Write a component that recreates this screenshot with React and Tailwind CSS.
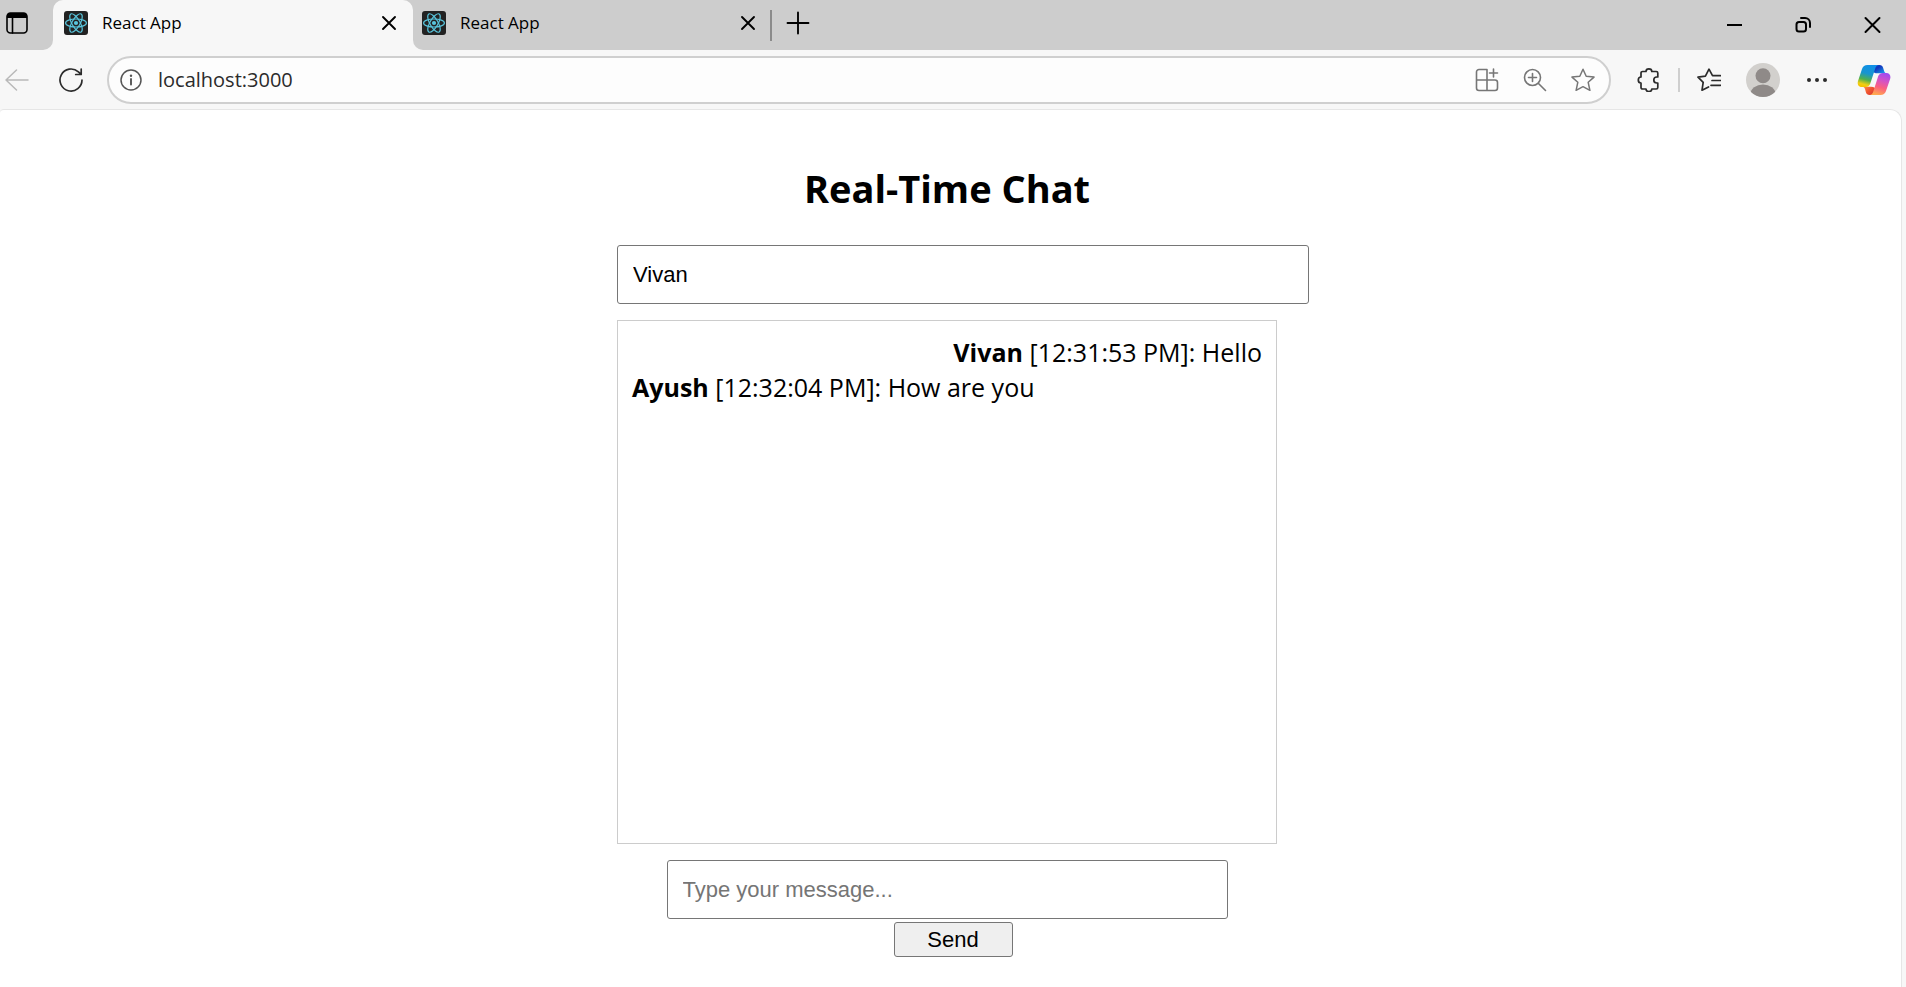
import React, { useState } from "react";

function ReactLogo() {
  return (
    <svg viewBox="0 0 24 24" className="size-6 shrink-0" aria-hidden="true">
      <rect width="24" height="24" rx="3" fill="#222" />
      <g fill="none" stroke="#58c4dc" strokeWidth="1.2">
        <ellipse cx="12" cy="12" rx="10.4" ry="4" />
        <ellipse cx="12" cy="12" rx="10.4" ry="4" transform="rotate(60 12 12)" />
        <ellipse cx="12" cy="12" rx="10.4" ry="4" transform="rotate(120 12 12)" />
      </g>
      <circle cx="12" cy="12" r="2.1" fill="#58c4dc" />
    </svg>
  );
}

function Icon({ children, className = "size-6", width = 1.5 }) {
  return (
    <svg
      viewBox="0 0 24 24"
      className={className}
      fill="none"
      stroke="currentColor"
      strokeWidth={width}
      strokeLinecap="round"
      strokeLinejoin="round"
      aria-hidden="true"
    >
      {children}
    </svg>
  );
}

function IconButton({ label, className = "w-12", children }) {
  return (
    <button type="button" aria-label={label} className={`flex h-12 shrink-0 items-center justify-center ${className}`}>
      {children}
    </button>
  );
}

function CloseGlyph() {
  return (
    <Icon width={1.9}>
      <path d="M6 6l12 12M18 6L6 18" />
    </Icon>
  );
}

function Tab({ title, className }) {
  return (
    <div className={`flex h-full items-center pb-1 ${className}`}>
      <ReactLogo />
      <span className="ml-[14px] flex-1 text-[17px] leading-6 text-black">{title}</span>
      <button type="button" aria-label={`Close ${title}`} className="flex size-6 items-center justify-center">
        <CloseGlyph />
      </button>
    </div>
  );
}

function CopilotLogo() {
  return (
    <svg viewBox="0 0 34 32" className="h-8 w-[34px]" aria-hidden="true">
      <defs>
        <linearGradient id="cpLeft" x1="0.6" y1="0" x2="0.35" y2="1">
          <stop offset="0" stopColor="#0f8fe8" />
          <stop offset="0.4" stopColor="#1795cf" />
          <stop offset="0.68" stopColor="#4fb04c" />
          <stop offset="0.9" stopColor="#f2cf12" />
          <stop offset="1" stopColor="#f5c400" />
        </linearGradient>
        <linearGradient id="cpRight" x1="0.7" y1="0" x2="0.4" y2="1">
          <stop offset="0" stopColor="#a04cf0" />
          <stop offset="0.35" stopColor="#d553c4" />
          <stop offset="0.65" stopColor="#fb6080" />
          <stop offset="1" stopColor="#ffa94e" />
        </linearGradient>
        <linearGradient id="cpTop" x1="0" y1="0" x2="1" y2="0.8">
          <stop offset="0" stopColor="#0b45c4" />
          <stop offset="0.4" stopColor="#1336bd" />
          <stop offset="1" stopColor="#16a0ee" />
        </linearGradient>
        <linearGradient id="cpBottom" x1="0" y1="0" x2="1" y2="0.6">
          <stop offset="0" stopColor="#ff9645" />
          <stop offset="0.6" stopColor="#f0532f" />
          <stop offset="1" stopColor="#d93a35" />
        </linearGradient>
      </defs>
      <path d="M15 1h7.500c2 0 3 1 3.600 2.800l1 3.200c.5 1.500 1.300 2.300 2.900 2.300H20c-3 0-5-2-5-5z" fill="url(#cpTop)" />
      <path d="M19 31h-6.500c-2 0-3-1-3.600-2.800L8 25c-.5-1.500-1.400-2.300-3-2.300h9c3 0 5 1.300 5 4.300z" fill="url(#cpBottom)" />
      <path d="M10.500 1H22c-2 0-3.100 1.300-3.800 3.400l-4.900 15c-.8 2.300-2.400 3.600-4.800 3.600H4.800C1.500 23 0 20.300 1 17L5 5c.9-2.700 2.700-4 5.500-4z" fill="url(#cpLeft)" />
      <path d="M23.500 31H12.500c2 0 3.100-1.300 3.800-3.400l4.800-15c.8-2.300 2.400-3.600 4.800-3.600h3.500c3.300 0 4.700 2.700 3.700 6L29 27c-.9 2.700-2.700 4-5.500 4z" fill="url(#cpRight)" />
    </svg>
  );
}

function TabStrip() {
  return (
    <div className="flex h-[50px] bg-[#f7f7f7] text-black">
      <div className="flex w-[53px] shrink-0 rounded-br-[10px] bg-[#cdcdcd] pb-1 pl-[5px]">
        <button type="button" aria-label="Tab actions" className="flex items-center">
          <Icon width={1.6}>
            <rect x="2" y="2" width="20" height="20" rx="3.500" />
            <path d="M2 5a3 3 0 0 1 3-3h14a3 3 0 0 1 3 3v2H2z" fill="currentColor" stroke="none" />
            <path d="M7.500 7v15" />
          </Icon>
        </button>
      </div>
      <div className="w-[360px] bg-[#cdcdcd]">
        <Tab title="React App" className="rounded-t-[10px] bg-[#f7f7f7] pr-3 pl-[11px]" />
      </div>
      <div className="flex min-w-0 flex-1 items-center rounded-bl-[10px] bg-[#cdcdcd]">
        <Tab title="React App" className="w-[357px] pr-[10px] pl-[9px]" />
        <span className="h-[31px] w-0.5 bg-[#8b8b8b]" />
        <button type="button" aria-label="New tab" className="ml-3 flex pb-1">
          <Icon className="size-7" width={1.6}>
            <path d="M12 3v18M3 12h18" />
          </Icon>
        </button>
        <div className="ml-auto flex">
          <IconButton label="Minimize" className="w-[69px]">
            <Icon width={2}>
              <path d="M5 12h15" strokeLinecap="butt" />
            </Icon>
          </IconButton>
          <IconButton label="Restore" className="w-[69px]">
            <Icon width={2}>
              <rect x="5.500" y="9" width="9.500" height="9.500" rx="2.500" />
              <path d="M10 5h4a5 5 0 0 1 5 5v4" />
            </Icon>
          </IconButton>
          <IconButton label="Close" className="w-[69px]">
            <Icon width={2}>
              <path d="M5.500 5l14 14M19.500 5l-14 14" />
            </Icon>
          </IconButton>
        </div>
      </div>
    </div>
  );
}

function Toolbar() {
  return (
    <div className="flex h-[59px] items-center bg-[#f7f7f7] text-[#2b2b2b]">
      <button type="button" aria-label="Back" className="ml-[5px] flex text-[#b9b9b9]">
        <Icon width={1.5}>
          <path d="M23 12H1M11.500 2L1 12l10.500 10" />
        </Icon>
      </button>
      <button type="button" aria-label="Refresh" className="ml-[30px] flex">
        <Icon width={1.7}>
          <path d="M23 12a11 11 0 1 1-3.600-8.100L22 6.200M22.200 1v5.500h-5.500" />
        </Icon>
      </button>
      <div className="ml-6 flex h-12 min-w-0 flex-1 items-center rounded-full border-2 border-[#cfcfcf] bg-[#fdfdfd]">
        <button type="button" aria-label="View site information" className="ml-[10px] flex text-[#555]">
          <Icon width={1.5}>
            <circle cx="12" cy="12" r="10" />
            <path d="M12 11v5.500" strokeWidth="1.900" />
            <circle cx="12" cy="7.800" r="1.200" fill="currentColor" stroke="none" />
          </Icon>
        </button>
        <input
          type="text"
          aria-label="Address"
          defaultValue="localhost:3000"
          className="ml-[15px] min-w-0 flex-1 bg-transparent text-[20px] leading-7 text-[#2b2b2b] outline-none"
        />
        <div className="mr-0.5 flex text-[#767676]">
          <IconButton label="App available">
            <Icon width={1.6}>
              <path d="M12 12H1.500V4a2.500 2.500 0 0 1 2.500-2.500h8zM12 12h8a2.500 2.500 0 0 1 2.500 2.500V20a2.500 2.500 0 0 1-2.500 2.500h-8zM1.500 12v8A2.500 2.500 0 0 0 4 22.500h8M18.500 1v8M14.500 5h8" />
            </Icon>
          </IconButton>
          <IconButton label="Zoom">
            <Icon width={1.6}>
              <circle cx="9.500" cy="9.500" r="8" />
              <path d="M15.500 15.500l7 7M9.500 5.500v8M5.500 9.500h8" />
            </Icon>
          </IconButton>
          <IconButton label="Add to favorites">
            <Icon width={1.5}>
              <path d="M12 1.200l3.200 7 7.800.9-5.800 5.200 1.700 8L12 18.700l-6.900 3.600 1.700-8L1 9.100l7.800-.9z" />
            </Icon>
          </IconButton>
        </div>
      </div>
      <IconButton label="Extensions" className="ml-[14px] w-12">
        <Icon width={1.700}>
          <path d="M9 3.500a2.900 2.600 0 0 1 5.800 0h4.400a1.600 1.600 0 0 1 1.600 1.600v3.900h-1a3 3 0 0 0 0 6h1v4.400a1.600 1.600 0 0 1-1.600 1.600h-4.400a2.900 2.600 0 0 1-5.800 0H5.600A1.600 1.600 0 0 1 4 19.400V15a2.700 3 0 0 1 0-6V5.100a1.600 1.600 0 0 1 1.600-1.600z" />
        </Icon>
      </IconButton>
      <span className="ml-[5px] h-6 w-0.5 bg-[#cfcfcf]" />
      <IconButton label="Favorites" className="ml-[5px] w-12">
        <Icon width={1.7}>
          <path d="M11.500 19l-6.500 3.200 1.200-7.800L1 9.200l7.400-1L12 1.200l3.500 6.500h8M15 12.500h8.500M14 17.300h9.500" />
        </Icon>
      </IconButton>
      <IconButton label="Profile" className="ml-[6px] w-12">
        <svg viewBox="0 0 34 34" className="size-[34px]" aria-hidden="true">
          <clipPath id="avatarClip">
            <circle cx="17" cy="17" r="17" />
          </clipPath>
          <circle cx="17" cy="17" r="17" fill="#d2d0cd" />
          <circle cx="17" cy="12.700" r="7.500" fill="#8f8a88" />
          <ellipse cx="17" cy="31" rx="12.500" ry="9.500" fill="#8f8a88" clipPath="url(#avatarClip)" />
        </svg>
      </IconButton>
      <IconButton label="Settings and more" className="ml-[6px] w-12">
        <Icon>
          <g fill="currentColor" stroke="none">
            <circle cx="4" cy="12" r="2" />
            <circle cx="12" cy="12" r="2" />
            <circle cx="20" cy="12" r="2" />
          </g>
        </Icon>
      </IconButton>
      <IconButton label="Copilot" className="mr-2 ml-[9px] w-12">
        <CopilotLogo />
      </IconButton>
    </div>
  );
}

const messages = [
  { user: "Vivan", time: "12:31:53 PM", text: "Hello" },
  { user: "Ayush", time: "12:32:04 PM", text: "How are you" },
];

const field =
  "rounded-[3px] border border-[#767676] bg-white px-[15px] py-4 font-['Liberation_Sans',Arial,sans-serif] text-[22px] leading-[25px] text-black outline-none placeholder:text-[#757575]";

function Chat() {
  const [name, setName] = useState("Vivan");
  const [draft, setDraft] = useState("");
  return (
    <main className="mx-auto w-[660px] text-center text-black">
      <h2 className="pt-[50px] text-[38px] leading-[56px] font-bold">Real-Time Chat</h2>
      <input
        type="text"
        aria-label="Your name"
        value={name}
        onChange={(e) => setName(e.target.value)}
        className={`mt-[29px] box-content block w-full ${field}`}
      />
      <div className="mt-4 h-[524px] overflow-y-auto border border-[#ccc] px-[14px] py-[14px] text-[25px] leading-[35px]">
        {messages.map((m) => (
          <div key={m.time} className={m.user === name ? "text-right" : "text-left"}>
            <strong className="font-bold">{m.user}</strong> [{m.time}]: {m.text}
          </div>
        ))}
      </div>
      <input
        type="text"
        aria-label="Message"
        placeholder="Type your message..."
        value={draft}
        onChange={(e) => setDraft(e.target.value)}
        className={`mx-auto mt-4 block w-[85%] ${field}`}
      />
      <button
        type="button"
        className="mt-[3px] ml-3 w-[119px] rounded-[3px] border border-[#767676] bg-[#efefef] py-1 font-['Liberation_Sans',Arial,sans-serif] text-[22px] leading-[25px]"
      >
        Send
      </button>
    </main>
  );
}

export default function App() {
  return (
    <div className="flex min-h-screen flex-col bg-[#f7f7f7] font-['Open_Sans','Noto_Sans',sans-serif]">
      <TabStrip />
      <Toolbar />
      <div className="mr-1 flex-1 rounded-tl-[4px] rounded-tr-[12px] border-t border-r border-[#e6e6e6] bg-white pr-[7px]">
        <Chat />
      </div>
    </div>
  );
}
